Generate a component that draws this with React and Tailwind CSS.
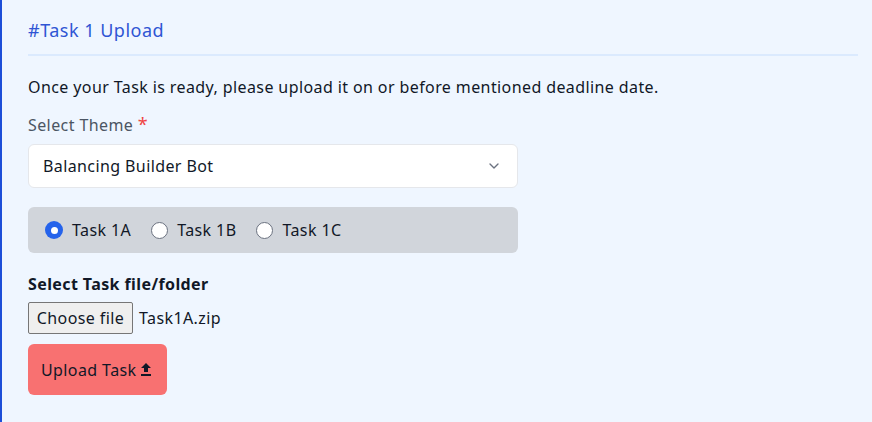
import { ChevronDown } from 'lucide-react'

function UploadIcon() {
  return (
    <svg width="10" height="13" viewBox="0 0 10 13" className="inline-block ml-[4px]">
      <path d="M5 0 L10 5 H7 V9 H3 V5 H0 Z" fill="currentColor" />
      <rect x="0" y="11" width="10" height="2" fill="currentColor" />
    </svg>
  )
}

export default function App() {
  const tasks = ['Task 1A', 'Task 1B', 'Task 1C']

  return (
    <div
      className="w-[872px] h-[422px] bg-[#eff6ff] border-l-2 border-[#1d4ed8] pl-[26px] pr-[14px] pt-[18px] text-[#111827] tracking-[0.4px]"
      style={{ fontFamily: '"Noto Sans", sans-serif' }}
    >
      <h2 className="text-[18px] leading-[24px] text-[#2f55d4] pb-[12px] border-b-2 border-[#dbeafe] tracking-[0.5px]">
        #Task 1 Upload
      </h2>

      <p className="mt-[19px] text-[16px] leading-[24px]">
        Once your Task is ready, please upload it on or before mentioned deadline date.
      </p>

      <div className="mt-[13px] text-[16px] leading-[24px] text-[#4b5563]">
        Select Theme <span className="text-[#ef4444] text-[18px]">*</span>
      </div>

      <div className="mt-[7px] w-[490px] h-[44px] bg-white border border-[#e5e7eb] rounded-md flex items-center justify-between pl-[14px] pr-[15px] text-[16px]">
        <span>Balancing Builder Bot</span>
        <ChevronDown size={16} strokeWidth={2} className="text-[#6b7280]" />
      </div>

      <div className="mt-[19px] w-[490px] h-[46px] bg-[#d1d5db] rounded-md flex items-center pl-[17px] gap-[20px] text-[16px]">
        {tasks.map((t, i) => (
          <label key={t} className="flex items-center gap-[9px]">
            <span
              className={
                i === 0
                  ? 'w-[18px] h-[18px] rounded-full bg-[#2563eb] flex items-center justify-center'
                  : 'w-[17px] h-[17px] rounded-full bg-white border border-[#6b7280]'
              }
            >
              {i === 0 && <span className="w-[7px] h-[7px] rounded-full bg-white" />}
            </span>
            {t}
          </label>
        ))}
      </div>

      <div className="mt-[19px] text-[16px] leading-[24px] font-bold">Select Task file/folder</div>

      <div className="mt-[6px] flex items-center text-[16px]">
        <span className="h-[32px] w-[105px] flex items-center justify-center bg-[#efefef] border border-[#767676] rounded-[2px]">
          Choose file
        </span>
        <span className="ml-[6px]">Task1A.zip</span>
      </div>

      <button className="mt-[10px] h-[51px] w-[139px] pl-[13px] bg-[#f87171] rounded-md text-[16px] flex items-center">
        Upload Task
        <UploadIcon />
      </button>
    </div>
  )
}
